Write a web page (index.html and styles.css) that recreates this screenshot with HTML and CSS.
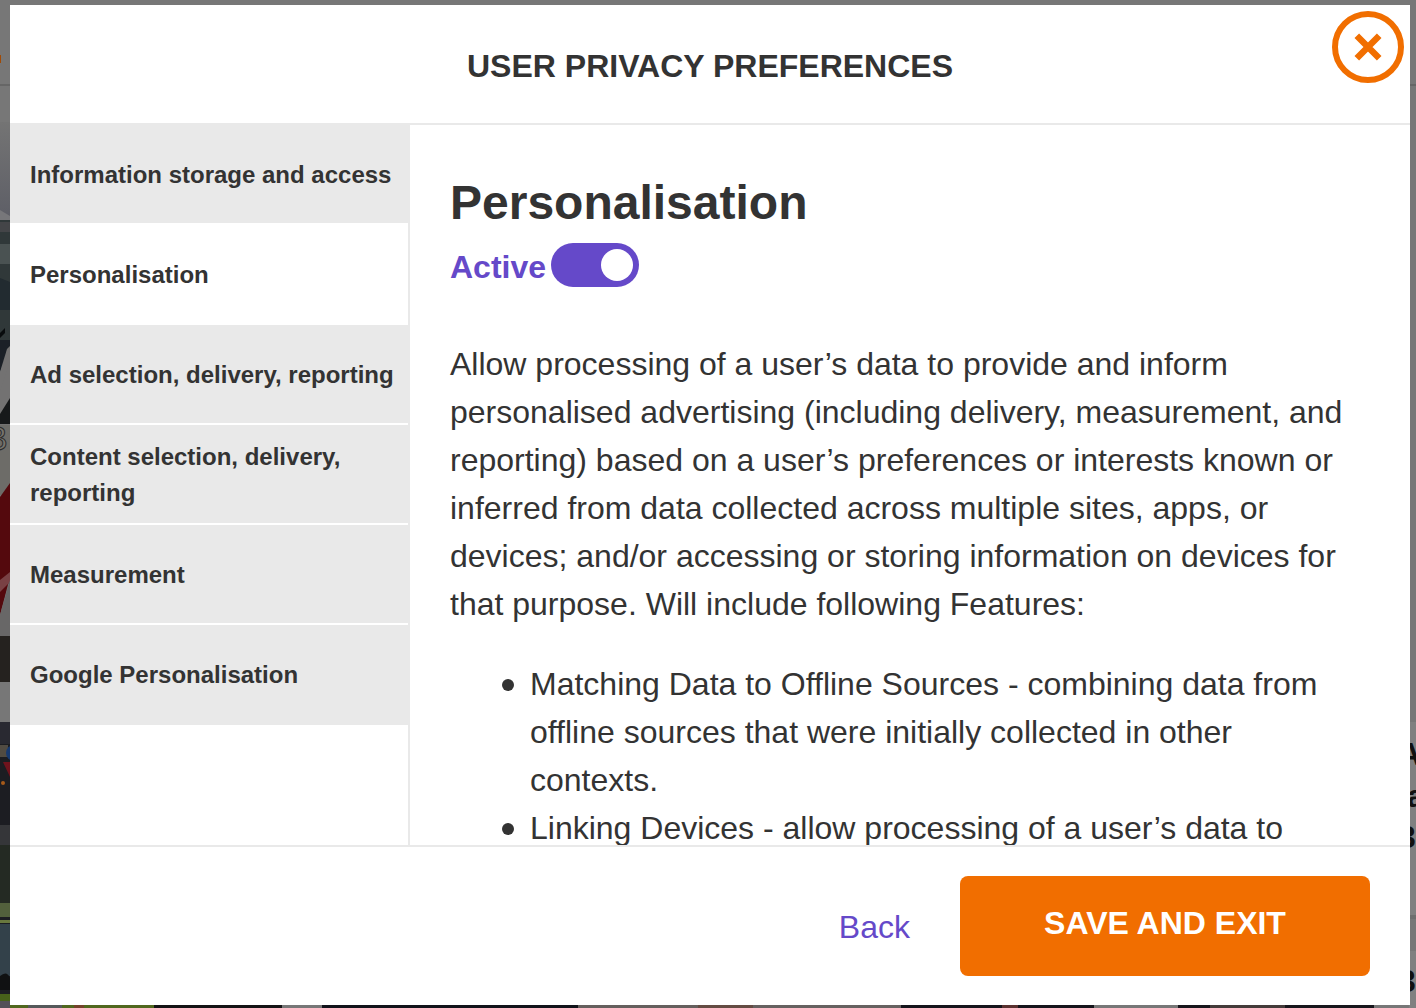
FILE: index.html
```html
<!DOCTYPE html>
<html lang="en">
<head>
<meta charset="utf-8">
<meta name="viewport" content="width=device-width, initial-scale=1">
<title>User privacy preferences</title>
<link rel="stylesheet" href="styles.css">
</head>
<body>
<svg class="backdrop" viewBox="0 0 1416 1008" preserveAspectRatio="none" aria-hidden="true">
  <defs>
    <linearGradient id="sky" x1="0" y1="0" x2="0" y2="1">
      <stop offset="0" stop-color="#747474"/>
      <stop offset="1" stop-color="#5d5e66"/>
    </linearGradient>
  </defs>
  <rect width="1416" height="1008" fill="#777"/>
  <path d="M0 55h1v8H0z" fill="#a04a05"/>
  <path d="M0 84h1416v2H0z" fill="#666"/>
  <!-- first photo -->
  <path d="M0 122h10v98H0z" fill="url(#sky)"/>
  <path d="M0 210l10 6v4H0z" fill="#77777a"/>
  <path d="M0 220h10v120H0z" fill="#303839"/>
  <path d="M0 222h10v10H0z" fill="#444548"/>
  <path d="M0 244h10v20H0z" fill="#4a5252"/>
  <path d="M0 278l10 4v28H0z" fill="#222b30"/>
  <path d="M0 333l5-5v5l-5 5z" fill="#080b0d"/>
  <path d="M0 340h10v86H0z" fill="#737272"/>
  <path d="M0 340h10v10L0 372z" fill="#1b2027"/>
  <path d="M0 372l7-23 3-3v16L0 392z" fill="#737272"/>
  <path d="M0 414l10-16v26H0z" fill="#17191a"/>
  <path d="M0 425h10v70H0z" fill="#6d6c68"/>
  <text x="-15" y="450" class="plate">B</text>
  <path d="M0 497l10-14v94L0 615z" fill="#54090d"/>
  <path d="M0 580l10-8v10L0 592z" fill="#794144"/>
  <path d="M0 615l10-35v56H0z" fill="#686767"/>
  <path d="M0 636h10v46H0z" fill="#25221f"/>
  <!-- second photo -->
  <path d="M0 722h10v286H0z" fill="#1c1d22"/>
  <path d="M0 722h10v22H0z" fill="#292931"/>
  <path d="M0 745h8v12H0z" fill="#514b42"/>
  <circle cx="14" cy="753" r="8" fill="#183a70"/>
  <path d="M3 762h7v15z" fill="#70131d"/>
  <circle cx="3" cy="783" r="2" fill="#a65a19"/>
  <path d="M0 825h10v20H0z" fill="#353639"/>
  <path d="M0 845h10v60H0z" fill="#242a23"/>
  <path d="M0 903h10v14H0z" fill="#52603c"/>
  <path d="M0 920h10v3H0z" fill="#69783e"/>
  <path d="M0 924h10v52H0z" fill="#33414a"/>
  <path d="M0 976q7-6 10 2v12H0z" fill="#101112"/>
  <path d="M0 994h10v7H0z" fill="#47611a"/>
  <path d="M0 1001h10v7H0z" fill="#535058"/>
  <!-- photo row under the dialog -->
  <path d="M10 1004h145v4H10z" fill="#50671e"/>
  <path d="M28 1004h34v4H28z" fill="#55595a"/>
  <path d="M74 1004h10v4H74z" fill="#74422b"/>
  <path d="M154 1004h128v4H154z" fill="#141315"/>
  <path d="M322 1004h256v4H322z" fill="#11131a"/>
  <path d="M578 1004h120v4H578z" fill="#655f5d"/>
  <path d="M698 1004h55v4h-55z" fill="#644c43"/>
  <path d="M753 1004h148v4H753z" fill="#666160"/>
  <path d="M901 1004h193v4H901z" fill="#15151b"/>
  <path d="M1002 1004h16v4h-16z" fill="#5a3130"/>
  <path d="M1178 1004h196v4h-196z" fill="#17161c"/>
  <path d="M1210 1004h75v4h-75z" fill="#443b3a"/>
  <!-- article cards on the right -->
  <path d="M1409 722h7v193h-7zM1409 951h7v57h-7z" fill="#808080"/>
  <path d="M1409 915h7v4h-7z" fill="#6e6e6e"/>
  <text x="1398" y="765" class="headline">A</text>
  <text x="1407" y="807" class="headline">a</text>
  <text x="1398" y="848" class="headline">3</text>
  <text x="1398" y="992" class="headline">3</text>
</svg>

<div class="overlay">
  <section class="dialog" role="dialog" aria-labelledby="dialog-title">
    <header class="dialog-header">
      <h1 class="dialog-title" id="dialog-title">USER PRIVACY PREFERENCES</h1>
      <button class="close" type="button" aria-label="Close">
        <svg viewBox="0 0 72 72" width="72" height="72" aria-hidden="true">
          <circle cx="36" cy="36" r="33" fill="none" stroke="#f16e00" stroke-width="6"/>
          <path d="M24.8 24.8l22.4 22.4M47.2 24.8L24.8 47.2" stroke="#f16e00" stroke-width="6.5"/>
        </svg>
      </button>
    </header>

    <div class="dialog-body">
      <nav class="purposes">
        <button class="purpose" type="button">Information storage and access</button>
        <button class="purpose purpose-current" type="button" aria-current="true">Personalisation</button>
        <button class="purpose" type="button">Ad selection, delivery, reporting</button>
        <button class="purpose" type="button">Content selection, delivery, reporting</button>
        <button class="purpose" type="button">Measurement</button>
        <button class="purpose" type="button">Google Personalisation</button>
      </nav>

      <div class="details">
        <h2 class="details-title">Personalisation</h2>
        <div class="status">
          <label class="status-label" for="active">Active</label>
          <input class="switch" type="checkbox" id="active" checked>
        </div>
        <p class="description">Allow processing of a user’s data to provide and inform personalised advertising (including delivery, measurement, and reporting) based on a user’s preferences or interests known or inferred from data collected across multiple sites, apps, or devices; and/or accessing or storing information on devices for that purpose. Will include following Features:</p>
        <ul class="features">
          <li>Matching Data to Offline Sources - combining data from offline sources that were initially collected in other contexts.</li>
          <li>Linking Devices - allow processing of a user’s data to</li>
        </ul>
      </div>
    </div>

    <footer class="dialog-footer">
      <a class="back" href="#">Back</a>
      <button class="save" type="button">SAVE AND EXIT</button>
    </footer>
  </section>
</div>
</body>
</html>
```

FILE: styles.css
```css
* {
  box-sizing: border-box;
}

body {
  margin: 0;
  background: #777;
  color: #333;
  font-family: "Helvetica Neue", "Liberation Sans", Arial, sans-serif;
  font-size: 32px;
  line-height: 48px;
}

button {
  font-family: inherit;
  border: 0;
  padding: 0;
  cursor: pointer;
}

.backdrop {
  position: fixed;
  inset: 0;
  width: 100%;
  height: 100%;
}

.plate {
  font-size: 34px;
  fill: #77756f;
  stroke: #2d2d2d;
}

.headline {
  font-size: 32px;
  font-weight: bold;
  fill: #111;
}

.overlay {
  position: relative;
  display: flex;
  height: 100vh;
  padding: 5px 6px 3px 10px;
}

.dialog {
  flex: 1;
  display: flex;
  flex-direction: column;
  min-width: 0;
  background: #fff;
}

.dialog-header {
  position: relative;
  display: flex;
  align-items: center;
  justify-content: center;
  min-height: 120px;
  padding-top: 4px;
  border-bottom: 2px solid #e9e9e9;
}

.dialog-title {
  margin: 0;
  font-size: 32px;
}

.close {
  position: absolute;
  top: 6px;
  right: 6px;
  width: 72px;
  height: 72px;
  background: none;
}

.close svg {
  display: block;
}

.dialog-body {
  flex: 1;
  display: flex;
  min-height: 0;
}

.purposes {
  flex: none;
  width: 400px;
  border-right: 2px solid #e9e9e9;
}

.purpose {
  display: block;
  width: 100%;
  height: 100px;
  padding: 2px 0 0 20px;
  border-bottom: 2px solid #fff;
  background: #e9e9e9;
  color: #333;
  font-size: 24px;
  font-weight: bold;
  line-height: 36px;
  text-align: left;
}

.purpose:last-child {
  border-bottom-color: #e9e9e9;
}

.purpose-current {
  background: #fff;
}

.details {
  flex: 1;
  min-width: 0;
  padding: 40px 50px 0 40px;
  overflow: hidden;
}

.details-title {
  margin: 0;
  font-size: 48px;
  line-height: 76px;
}

.status {
  display: flex;
  align-items: center;
  gap: 5px;
  height: 48px;
  color: #6549c9;
  font-weight: bold;
}

.status-label {
  padding-top: 4px;
}

.switch {
  appearance: none;
  display: flex;
  justify-content: flex-end;
  width: 88px;
  height: 44px;
  margin: 0;
  padding: 6px;
  border-radius: 22px;
  background: #6549c9;
}

.switch::before {
  content: "";
  width: 32px;
  height: 32px;
  border-radius: 50%;
  background: #fff;
}

.switch:not(:checked) {
  justify-content: flex-start;
  background: #999;
}

.description {
  margin: 51px 0 32px;
}

.features {
  margin: 0;
  padding-left: 80px;
  list-style: none;
}

.features li::before {
  content: "";
  display: inline-block;
  width: 12px;
  height: 12px;
  margin: 0 16px 0 -28px;
  border-radius: 50%;
  background: #333;
  vertical-align: 4px;
}

.dialog-footer {
  display: flex;
  align-items: center;
  justify-content: flex-end;
  gap: 50px;
  min-height: 160px;
  padding: 0 40px;
  border-top: 2px solid #e9e9e9;
}

.back {
  padding-top: 2px;
  color: #6549c9;
  text-decoration: none;
}

.save {
  width: 410px;
  height: 100px;
  padding-bottom: 6px;
  border-radius: 8px;
  background: #f16e00;
  color: #fff;
  font-size: 32px;
  font-weight: bold;
}
```
